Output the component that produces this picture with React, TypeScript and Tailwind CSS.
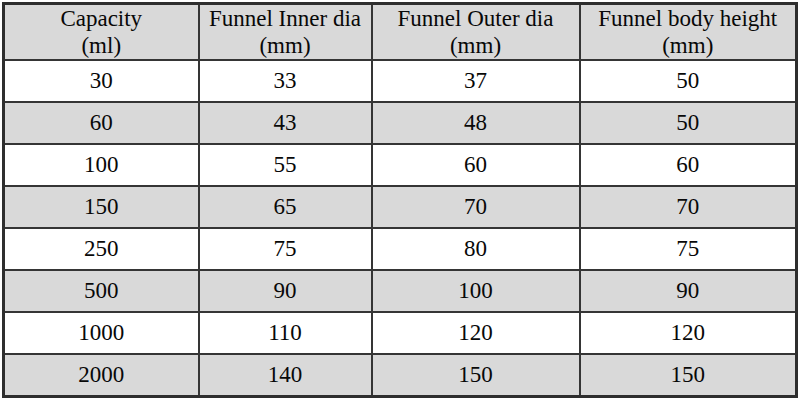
import React from "react";

const rows = [
  ["30", "33", "37", "50"],
  ["60", "43", "48", "50"],
  ["100", "55", "60", "60"],
  ["150", "65", "70", "70"],
  ["250", "75", "80", "75"],
  ["500", "90", "100", "90"],
  ["1000", "110", "120", "120"],
  ["2000", "140", "150", "150"],
];

export default function App() {
  return (
    <div className="w-[800px] h-[400px] bg-white pl-[2px] pt-[2px] overflow-hidden">
      <table
        className="w-[795px] border-collapse border-[3px] border-[#2e2e2e] text-[23px] text-[#080808] table-fixed"
        style={{ fontFamily: '"Liberation Serif", "Times New Roman", serif' }}
      >
        <colgroup>
          <col className="w-[195px]" />
          <col className="w-[173px]" />
          <col className="w-[208px]" />
          <col className="w-[217px]" />
        </colgroup>
        <thead>
          <tr className="h-[56px] bg-[#d9d9d9]">
            {[
              ["Capacity", "(ml)"],
              ["Funnel Inner dia", "(mm)"],
              ["Funnel Outer dia", "(mm)"],
              ["Funnel body height", "(mm)"],
            ].map((h, i) => (
              <th
                key={i}
                className="border-2 border-[#353535] font-normal text-center leading-[27px] p-0 align-middle"
              >
                {h[0]}
                <br />
                {h[1]}
              </th>
            ))}
          </tr>
        </thead>
        <tbody>
          {rows.map((r, ri) => (
            <tr
              key={ri}
              className={ri % 2 === 1 ? "h-[42px] bg-[#d9d9d9]" : "h-[42px] bg-white"}
            >
              {r.map((c, ci) => (
                <td
                  key={ci}
                  className="border-2 border-[#353535] text-center p-0 leading-[28px] align-middle"
                >
                  {c}
                </td>
              ))}
            </tr>
          ))}
        </tbody>
      </table>
    </div>
  );
}
